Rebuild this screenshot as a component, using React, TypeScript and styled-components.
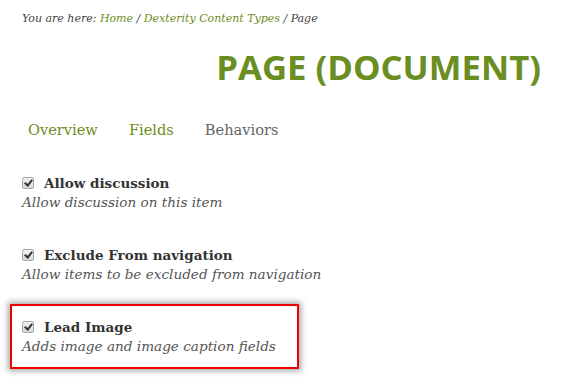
import React from "react";
import styled, { createGlobalStyle } from "styled-components";

const GlobalStyle = createGlobalStyle`
	html, body {
		margin: 0;
		padding: 0;
		background: #ffffff;
	}
	body {
		font-family: "DejaVu Serif", "Liberation Serif", serif;
		color: #444444;
	}
`;

const green = "#6b8e23";

const Page = styled.div`
	width: 565px;
	height: 387px;
	box-sizing: border-box;
	padding: 12px 24px 0 22px;
	overflow: hidden;
`;

const Breadcrumbs = styled.div`
	font-size: 11px;
	font-style: italic;
	color: #444;
	line-height: 14px;

	a {
		color: ${green};
		text-decoration: none;
	}
`;

const Title = styled.h1`
	margin: 21px 0 0;
	text-align: right;
	font-family: "Open Sans", "Noto Sans", sans-serif;
	font-weight: 700;
	font-size: 34.7px;
	line-height: 40px;
	color: ${green};
	text-transform: uppercase;
`;

const Tabs = styled.nav`
	display: flex;
	gap: 31px;
	margin: 34px 0 0 6px;
`;

const Tab = styled.a<{ $active?: boolean }>`
	font-size: 14.6px;
	line-height: 18px;
	color: ${(p) => (p.$active ? green : "#666")};
	text-decoration: none;
`;

const Fields = styled.div`
	display: flex;
	flex-direction: column;
	gap: 35px;
	margin-top: 35px;
`;

const Field = styled.div<{ $highlight?: boolean }>`
	display: flex;
	flex-direction: column;
	gap: 1px;
	${(p) =>
		p.$highlight &&
		`
		margin: -14px 0 0 -12px;
		padding: 12px 21px 12px 10px;
		width: fit-content;
		border: 2px solid #ee0000;
		box-shadow: 0 0 6px 2px rgba(0, 0, 0, 0.35);
	`}
`;

const LabelRow = styled.label`
	display: flex;
	align-items: center;
	gap: 10px;
	font-weight: 700;
	font-size: 13.5px;
	line-height: 18px;
	color: #333;
`;

const Check = styled.input`
	appearance: none;
	position: relative;
	margin: 0 0 1px;
	width: 12px;
	height: 12px;
	box-sizing: border-box;
	border: 1px solid #a8a8a8;
	border-radius: 2px;
	background: linear-gradient(#f2f2f2, #d8d8d8);

	&:checked::after {
		content: "";
		position: absolute;
		left: 3px;
		top: 0px;
		width: 3px;
		height: 6px;
		border: solid #333;
		border-width: 0 2px 2px 0;
		transform: rotate(40deg);
	}
`;

const Help = styled.div`
	font-style: italic;
	font-size: 13.6px;
	line-height: 18px;
	color: #555;
`;

const fields = [
	{ label: "Allow discussion", help: "Allow discussion on this item" },
	{ label: "Exclude From navigation", help: "Allow items to be excluded from navigation" },
	{ label: "Lead Image", help: "Adds image and image caption fields", highlight: true },
];

export default function App() {
	return (
		<>
			<GlobalStyle />
			<Page>
				<Breadcrumbs>
					You are here: <a href="#">Home</a> / <a href="#">Dexterity Content Types</a> / Page
				</Breadcrumbs>
				<Title>Page (Document)</Title>
				<Tabs>
					<Tab href="#" $active>Overview</Tab>
					<Tab href="#" $active>Fields</Tab>
					<Tab href="#">Behaviors</Tab>
				</Tabs>
				<Fields>
					{fields.map((f) => (
						<Field key={f.label} $highlight={f.highlight}>
							<LabelRow>
								<Check type="checkbox" defaultChecked />
								{f.label}
							</LabelRow>
							<Help>{f.help}</Help>
						</Field>
					))}
				</Fields>
			</Page>
		</>
	);
}
